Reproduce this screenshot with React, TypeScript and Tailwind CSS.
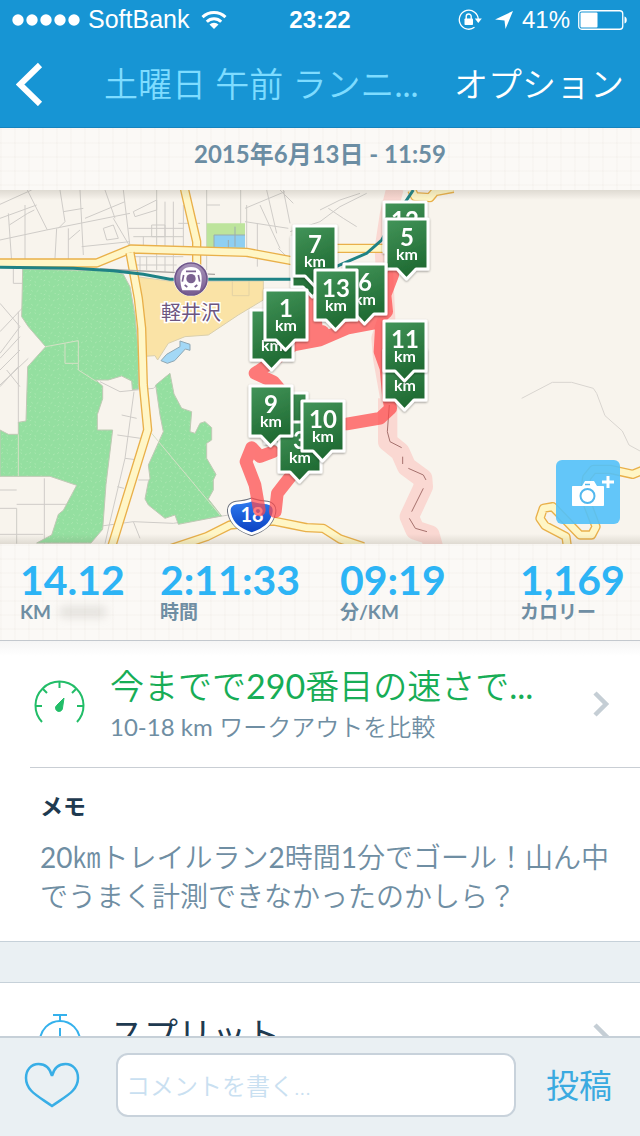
import type { ReactNode } from "react";

const gridPaper =
  "bg-[#fbf9f6] bg-[image:linear-gradient(to_right,rgba(120,100,70,0.02)_2px,transparent_2px),linear-gradient(to_bottom,rgba(120,100,70,0.02)_2px,transparent_2px)] bg-[size:14px_14px]";

const stats = [
  { value: "14.12", label: "KM", redacted: true },
  { value: "2:11:33", label: "時間" },
  { value: "09:19", label: "分/KM" },
  { value: "1,169", label: "カロリー" },
];

type PinProps = { x: number; y: number; km?: number; unit?: boolean };

// drawn in order, later pins sit on top; buried pins carry no number
const pins: PinProps[] = [
  { km: 12, x: 382, y: 200, unit: false },
  { km: 5, x: 384, y: 217 },
  { x: 290, y: 235, unit: false },
  { km: 7, x: 292, y: 224 },
  { km: 6, x: 342, y: 262 },
  { km: 13, x: 313, y: 268 },
  { x: 249, y: 308 },
  { km: 1, x: 263, y: 288 },
  { x: 382, y: 348 },
  { km: 11, x: 382, y: 319 },
  { x: 263, y: 391, unit: false },
  { km: 3, x: 277, y: 420 },
  { km: 9, x: 248, y: 384 },
  { km: 10, x: 300, y: 399 },
];

function StatusBar() {
  return (
    <div className="grid h-10 grid-cols-[1fr_auto_1fr] items-center px-3 font-['Liberation_Sans',sans-serif] text-2xl">
      <div className="flex items-center gap-2">
        <svg width="68" height="12" viewBox="0 0 68 12" fill="currentColor" aria-hidden="true">
          {[6, 20, 34, 48, 62].map((cx) => (
            <circle key={cx} cx={cx} cy="6" r="5.7" />
          ))}
        </svg>
        <span className="text-[25px]">SoftBank</span>
        <svg className="ml-1" width="26" height="20" viewBox="0 0 26 20" aria-hidden="true">
          <g fill="none" stroke="currentColor" strokeWidth="3">
            <path d="M1.5 7.2a16.5 16.5 0 0 1 23 0" />
            <path d="M5.8 11.7a10.3 10.3 0 0 1 14.4 0" />
          </g>
          <path d="M8.5 14.6a6.3 6.3 0 0 1 9 0L13 19z" fill="currentColor" />
        </svg>
      </div>
      <span className="font-bold">23:22</span>
      <div className="flex items-center justify-end gap-2">
        <svg className="ml-1" width="24" height="22" viewBox="0 0 24 22" aria-hidden="true">
          <path d="M20.3 10.5A9.5 9.5 0 1 0 16.5 18.3" fill="none" stroke="currentColor" strokeWidth="1.3" />
          <path d="M16.8 9.5h7l-3.5 4.5z" fill="currentColor" />
          <rect x="6.5" y="9.5" width="8.5" height="6.5" rx="0.8" fill="currentColor" />
          <path d="M8.2 10V7.5a2.5 2.5 0 0 1 5 0V10" fill="none" stroke="currentColor" strokeWidth="1.4" />
        </svg>
        <svg className="ml-1" width="20" height="20" viewBox="0 0 20 20" fill="currentColor" aria-hidden="true">
          <path d="M19 1 11.5 19 10.5 10.5 1 9.5z" />
        </svg>
        <span>41%</span>
        <svg width="50" height="20" viewBox="0 0 50 20" aria-hidden="true">
          <rect x="0.75" y="0.75" width="44" height="18.5" rx="3" fill="none" stroke="currentColor" strokeWidth="1.3" />
          <rect x="2.5" y="2.5" width="17" height="15" rx="1" fill="currentColor" />
          <path d="M46.5 6.5c3 .8 3 6.2 0 7z" fill="currentColor" />
        </svg>
      </div>
    </div>
  );
}

function Road({ d }: { d: string }) {
  return (
    <g fill="none" strokeLinejoin="round">
      <path d={d} stroke="#e9b04a" strokeWidth="28" />
      <path d={d} stroke="#fff6c6" strokeWidth="20" />
    </g>
  );
}

function Pin({ km, x, y, unit = true }: PinProps) {
  return (
    <g transform={`translate(${x} ${y})`} filter="url(#pinShadow)">
      <path
        d="M2 2h42v50H32l-9.5 10L13 52H2z"
        fill="url(#pinFill)"
        stroke="#fff"
        strokeWidth="3"
        strokeLinejoin="round"
      />
      {km && (
        <text x="23" y="29" textAnchor="middle" fill="#fff" fontSize="24" fontWeight="700">
          {km}
        </text>
      )}
      {unit && (
        <text x="23" y="43" textAnchor="middle" fill="#fff" fontSize="16" fontWeight="700">
          km
        </text>
      )}
    </g>
  );
}

function RouteMap() {
  return (
    <svg
      className="block h-[354px] w-full font-['Lato','Noto_Sans_CJK_JP',sans-serif]"
      viewBox="0 190 640 354"
      preserveAspectRatio="xMidYMid slice"
      role="img"
      aria-label="ルートマップ"
    >
      <defs>
        <linearGradient id="pinFill" x1="0" y1="0" x2="0.3" y2="1">
          <stop offset="0" stopColor="#43955a" />
          <stop offset="1" stopColor="#1f6a32" />
        </linearGradient>
        <linearGradient id="stationFill" x1="0" y1="0" x2="0" y2="1">
          <stop offset="0" stopColor="#a895ba" />
          <stop offset="1" stopColor="#765a90" />
        </linearGradient>
        <linearGradient id="shieldFill" x1="0" y1="0" x2="0" y2="1">
          <stop offset="0" stopColor="#2f7cf0" />
          <stop offset="1" stopColor="#0a3fc0" />
        </linearGradient>
        <linearGradient id="edgeShade" x1="0" y1="0" x2="0" y2="1">
          <stop offset="0" stopColor="#6b6455" stopOpacity="0.18" />
          <stop offset="1" stopColor="#6b6455" stopOpacity="0" />
        </linearGradient>
        <pattern id="grass" width="42" height="42" patternUnits="userSpaceOnUse">
          <rect width="42" height="42" fill="#94dfa0" />
          <path
            d="M4 8l5-4M20 5l4 3M33 12l5-3M10 22l4 3M26 26l5-4M38 30l3 3M5 36l5-3M20 38l4 2"
            stroke="#b3eab6"
            strokeWidth="2"
          />
        </pattern>
        <filter id="pinShadow" x="-20%" y="-20%" width="140%" height="140%">
          <feDropShadow dx="0" dy="1" stdDeviation="1.2" floodColor="#000" floodOpacity="0.4" />
        </filter>
      </defs>
      <rect x="0" y="190" width="640" height="354" fill="#f8f4ed" />

      {/* terrain is plotted at three units per map point */}
      <g transform="translate(0 185) scale(0.33333)">
        {/* minor streets */}
        <g fill="none" stroke="#cfccc8" strokeWidth="3">
          <path d="M0 58 95 15M0 100l110-40M0 165l140-30 250-50M82 15l60 120M28 120l55-35 20-10M25 85l10 145M75 60v165M170 130l-5 90M180 15l15 95-20 20M205 130v95M205 165l35-30M240 15l10 195M190 80l60-10M245 185l145-15M315 15l30 85M255 100l120-50M310 130l30-10 15 40-35 5zM340 100l50 85M370 15l20 170M400 80l70-35v30l-65 20zM470 15v170M495 50v140M520 50v140M550 60v125M385 130h165M400 155h150M455 120h40v35h-40zM430 155v40M400 215h150M420 215v45M440 215v40M470 205v50M495 215v45M520 210v50M620 15v240M600 115h-65M400 240h130" />
          <path d="M620 60h40M40 250v45h30M0 355l60 70-60 80M0 440l90-95M0 520l60-65M0 555l60-60M0 600l85-80M20 555l40 50M55 380v335M0 605l55-60" />
          <path d="M0 915h50M0 970h50v106M50 958h165M133 880v196M0 1048h130M365 690l45 10M352 750l70 10M375 820l40 5M352 905l20 5M402 620l-27 200-45 190-15 66M415 885h35M300 590l60 30 100-10 50-45M290 1025l110-15 20 50M400 1010l120 5 200-30" />
          <path d="M722 15v110M740 60v130M780 60l60 130M772 115v130M735 70l120-50M850 15l20 100M800 15l30 130M840 15l40 40M870 140l90-30 60-45M960 75l60-30 60-20M985 70l45 30 40 25M1100 25l-80 40M735 110l130 20M750 215l110 10M835 190l30 30" />
        </g>
        {/* forest */}
        <g fill="url(#grass)" stroke="#bfc9b4" strokeWidth="3">
          <path d="M68 252 340 258 370 268 390 305 405 390 415 500V612l-18 2-2-26-30-15-40 12h-38l21 18v38l-16 48v46h46l-20 163-10 135-35 41H110l45-24 20-62 15-12 40-75-80-27H0V735l25 13h30v-36l23-4 5-163 54-60-52-60-20-30z" />
          <path d="M467 600 510 565 522 627 545 670 575 680 570 740 585 745 600 715 615 710 635 728V765L620 775V820L648 868 640 885V915L625 942 665 993 535 1018 525 990 495 1000 445 960 435 942 445 890 450 880 445 840 490 740 480 690z" />
        </g>
        <path d="M137 485l98-18v68h-40v-60M235 535v20l55 35M455 745l205 245M55 748v125" fill="none" stroke="#d5e0c6" strokeWidth="3" />
        {/* resort grounds and water */}
        <path d="M410 275 520 290 790 288V345l-75 45-90 60-70 5-50 20-32 50-8-13-32 2-8-130z" fill="#fae3a6" stroke="#d9cfae" strokeWidth="3" />
        <path d="M697 282h50v50h-50z" fill="none" stroke="#e3d2a4" strokeWidth="3" />
        <path d="M483 527 500 508 540 485V468l30 10v18l-14-4-32 35-22 8z" fill="#a3d8f6" stroke="#8fa6b2" strokeWidth="3" />
        <path d="M620 115h115v75H620z" fill="#bde49c" />
        <path d="M642 150h93v38h-93z" fill="#8fcff2" />
        <path d="M642 188v-38h93M685 165v25M705 125v60" fill="none" stroke="#9cabaf" strokeWidth="3" />
        <path d="M1565 640 1657 592H1715L1780 610 1790 625 1815 692 1867 738 1887 780 1920 798" fill="none" stroke="#d9d5d0" strokeWidth="3" />

        {/* border band */}
        <g fill="none" stroke="#fad8d2" strokeLinejoin="round">
          <path d="M1185 10 1165 90 1150 190 1160 400 1140 460 1145 520 1170 660" strokeWidth="52" />
          <path d="M1163 640V770L1200 800 1220 845 1268 880 1270 905 1228 995 1245 1035 1290 1050 1300 1085" strokeWidth="58" />
        </g>
        <path d="M1168 660 1162 740 1170 770 1205 788M1208 815v22M1225 850l45 20 8 15M1270 910l-35 70M1228 1000l18 30 35 10" fill="none" stroke="#a5706c" strokeWidth="3" />

        {/* trunk roads */}
        <Road d="M553 10 590 170V255" />
        <Road d="M-10 234H290L392 192 740 202 880 228 980 205 1010 190H1160" />
        <Road d="M390 203 415 340 425 430 430 600 443 735 335 1085" />
        <Road d="M500 1095 620 1055 690 1020 820 1008 870 1018 920 1028 970 1030 1020 1062 1090 1085" />
        <Road d="M1235 15 1245 35 1290 38 1305 20 1360 10" />
        <Road d="M1702 1085 1698 1055 1635 1022 1620 1000 1630 970 1658 965 1740 1050H1775L1788 1025 1752 930 1760 878 1780 853H1830L1898 868 1930 855" />

        {/* railway */}
        <path d="M300 252 645 268" fill="none" stroke="#a8a4a0" strokeWidth="4" />
        <path d="M0 247 220 250 340 257 430 268 510 283H880L940 275 1020 240 1100 205 1145 165 1180 105 1240 15" fill="none" stroke="#1f8285" strokeWidth="9" />
        <circle cx="573" cy="282" r="52" fill="#fff" />
        <circle cx="573" cy="282" r="48" fill="url(#stationFill)" stroke="#6f568a" strokeWidth="5" />
        <path d="M573 246c22 0 32 12 32 34 0 15-2 26-6 36h-52c-4-10-6-21-6-36 0-22 10-34 32-34z" fill="#fff" />
        <path d="M558 259h30M551 270l-4 20M595 270l4 20M554 300l8 6M592 300l-8 6" fill="none" stroke="#7b6391" strokeWidth="5" />
        <circle cx="573" cy="281" r="14" fill="#7b6391" />

        {/* route 18 shield */}
        <path
          d="M755 945c-15 6-30 8-46 9-16 2-24 14-20 31 8 34 31 50 66 61 35-11 58-27 66-61 4-17-4-29-20-31-16-1-31-3-46-9z"
          fill="#fff"
          stroke="#6d737f"
          strokeWidth="14"
        />
        <path
          d="M755 945c-15 6-30 8-46 9-16 2-24 14-20 31 8 34 31 50 66 61 35-11 58-27 66-61 4-17-4-29-20-31-16-1-31-3-46-9z"
          fill="url(#shieldFill)"
          stroke="#fff"
          strokeWidth="8"
        />
      </g>

      <text x="191" y="320" textAnchor="middle" fontSize="20" fill="#6d5680" stroke="#fff" strokeWidth="3" paintOrder="stroke">
        軽井沢
      </text>
      <text x="252" y="522" textAnchor="middle" fontSize="20" fontWeight="700" fill="#fff">
        18
      </text>

      {/* recorded track */}
      <g transform="translate(0 185) scale(0.33333)" opacity="0.72" fill="none" stroke="#ff4a4c" strokeWidth="38" strokeLinejoin="round" strokeLinecap="round">
        <path d="M826 980 832 925 875 870 925 830M820 800 780 815 755 788 738 830 765 900 778 975M850 625 820 590 765 565 810 535 880 480 960 465 1040 430 1120 415 1160 380 1155 330 1178 270M1145 410 1140 500 1158 550 1166 640 1172 670 1140 700 1040 717 960 720" />
        <path d="M935 350 945 450 900 468 965 445" strokeWidth="50" />
      </g>

      {pins.map((pin) => (
        <Pin key={`${pin.x}-${pin.y}`} {...pin} />
      ))}
      <rect x="0" y="190" width="640" height="10" fill="url(#edgeShade)" />
      <rect x="0" y="190" width="640" height="10" fill="url(#edgeShade)" transform="rotate(180 320 367)" />
    </svg>
  );
}

function CardRow({ icon, children }: { icon: ReactNode; children: ReactNode }) {
  return (
    <a href="#" className="flex items-center pr-7 pl-[30px]">
      <span className="flex w-20 shrink-0 pl-1">{icon}</span>
      <span className="min-w-0 flex-1">{children}</span>
      <svg className="mt-1" width="20" height="26" viewBox="0 0 20 26" fill="none" aria-hidden="true">
        <path d="M3 2 14 13 3 24" stroke="#c5ced5" strokeWidth="4.5" />
      </svg>
    </a>
  );
}

export default function App() {
  return (
    <div className="flex h-screen flex-col overflow-hidden bg-white font-['Lato','Noto_Sans_CJK_JP',sans-serif] text-[#6f8ea3]">
      <header className="shrink-0 border-b border-[#1583bd] bg-[#1795d4] text-white">
        <StatusBar />
        <div className="flex h-[87px] items-center px-4">
          <button type="button" aria-label="戻る" className="shrink-0">
            <svg width="28" height="44" viewBox="0 0 28 44" fill="none" aria-hidden="true">
              <path d="M24 3 4 22.5 24 42" stroke="currentColor" strokeWidth="6" />
            </svg>
          </button>
          <h1 className="ml-[60px] min-w-0 flex-1 text-[34px] leading-10 font-[350] whitespace-nowrap text-[#7edcff]">
            土曜日 午前 ランニ<span className="font-normal">...</span>
          </h1>
          <button type="button" className="shrink-0 text-[34px] leading-10 font-[350]">
            オプション
          </button>
        </div>
      </header>

      <main className="min-h-0 flex-1 overflow-hidden">
        <div className={`flex h-[62px] justify-center pt-3 text-2xl leading-7 font-bold text-[#6b8da3] ${gridPaper}`}>
          <time dateTime="2015-06-13T11:59">2015年6月13日 - 11:59</time>
        </div>

        <div className="relative">
          <RouteMap />
          <button
            type="button"
            aria-label="写真を追加"
            className="absolute right-5 bottom-5 flex size-16 items-center justify-center rounded-md bg-[#52c1f9]/90 text-white"
          >
            <svg width="64" height="64" viewBox="0 0 64 64" aria-hidden="true">
              <path d="M17 26h9l3-5h9l3 5h6c.6 0 1 .4 1 1v18c0 .6-.4 1-1 1H17c-.6 0-1-.4-1-1V27c0-.6.4-1 1-1z" fill="currentColor" />
              <circle cx="31.5" cy="36" r="7" fill="none" stroke="#52b8ee" strokeWidth="2" />
              <path d="M29 24.5h5" stroke="#52b8ee" strokeWidth="1.5" />
              <path d="M52 16v12M46 22h12" stroke="currentColor" strokeWidth="3" />
            </svg>
          </button>
        </div>

        <dl className={`grid h-[97px] grid-cols-[7fr_9fr_9fr_5fr] border-b border-[#c3c8ce] px-5 pt-4 ${gridPaper}`}>
          {stats.map((s) => (
            <div key={s.label} className="flex min-w-0 flex-col-reverse justify-end">
              <dt className="flex items-center text-[19px] leading-6 font-bold whitespace-nowrap">
                {s.label}
                {s.redacted && <span className="ml-2 h-3 w-12 rounded-full bg-[#a9a49c]/25 blur-xs" />}
              </dt>
              <dd className="text-[41px] leading-10 font-bold text-[#2db4f5]">{s.value}</dd>
            </div>
          ))}
        </dl>

        <section className="bg-linear-to-b from-[#f5f5f5] to-white to-5%">
          <div className="pt-5 pb-6">
            <CardRow
              icon={
                <svg width="52" height="44" viewBox="0 0 52 44" fill="none" stroke="#22bd68" strokeWidth="2" aria-hidden="true">
                  <path d="M8 42a24 24 0 1 1 35 0" />
                  <path d="M25.5 2v6M9 9l4 4M42 9l-4 4M2 26h6M49 26h-6" />
                  <path d="M30 18 28.5 28a3.5 3.5 0 1 1-6-2.5z" fill="#22bd68" strokeWidth="1" />
                </svg>
              }
            >
              <span className="block text-[34px] leading-[50px] font-[350] whitespace-nowrap text-[#17ad56]">
                今までで<span className="font-normal">290</span>番目の速さで<span className="font-normal">...</span>
              </span>
              <span className="block text-2xl font-[350]">
                <span className="font-normal">10-18 km</span> ワークアウトを比較
              </span>
            </CardRow>
          </div>
          <hr className="ml-[30px] border-[#c9ced4]" />
          <div className="px-10 pt-[22px] pb-[25px]">
            <h2 className="text-[23px] leading-8 font-bold text-[#1e3a50]">メモ</h2>
            <p className="mt-4 text-[28px] leading-[39px] font-[350] whitespace-nowrap">
              <span className="font-normal">20</span>㎞トレイルラン<span className="font-normal">2</span>時間
              <span className="font-normal">1</span>分でゴール！山ん中
              <br />
              でうまく計測できなかったのかしら？
            </p>
          </div>
        </section>

        <div className="h-[42px] border-y border-[#c6d1d9] bg-[#eaf0f3]" />

        <section className="pt-6">
          <CardRow
            icon={
              <svg width="52" height="54" viewBox="0 0 52 54" fill="none" stroke="#35b1ec" strokeWidth="2" aria-hidden="true">
                <circle cx="26" cy="34" r="20" />
                <path d="M19 8h14M26 8v6M26 21v14" />
              </svg>
            }
          >
            <span className="block text-[34px] leading-[50px] text-[#1e3a50]">スプリット</span>
          </CardRow>
        </section>
      </main>

      <footer className="flex h-[100px] shrink-0 items-center border-t-2 border-[#c6d0d8] bg-[#eaf0f3] pb-1 pl-6">
        <button type="button" aria-label="いいね" className="shrink-0">
          <svg width="56" height="46" viewBox="0 0 56 46" fill="none" aria-hidden="true">
            <path
              d="M28 14C26 6 21 2 14.5 2 7 2 2 8 2 16c0 13 12 18 26 28 14-10 26-15 26-28 0-8-5-14-12.5-14C35 2 30 6 28 14z"
              stroke="#38aee6"
              strokeWidth="2.5"
            />
          </svg>
        </button>
        <input
          type="text"
          aria-label="コメント"
          placeholder="コメントを書く..."
          className="ml-9 h-16 min-w-0 flex-1 rounded-xl border-2 border-[#c8d2db] bg-white px-2 text-2xl font-[350] text-[#1e3a50] placeholder:text-[#c9e0f1]"
        />
        <button type="button" className="shrink-0 pr-7 pl-[30px] text-[33px] leading-10 text-[#3aaae0]">
          投稿
        </button>
      </footer>
    </div>
  );
}
